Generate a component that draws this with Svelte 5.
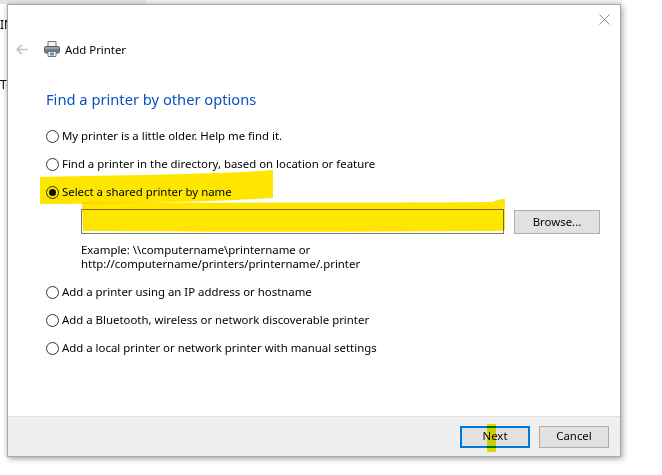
<script>
  const options = [
    { label: 'My printer is a little older. Help me find it.' },
    { label: 'Find a printer in the directory, based on location or feature' },
    { label: 'Select a shared printer by name', checked: true, path: true },
    { label: 'Add a printer using an IP address or hostname' },
    { label: 'Add a Bluetooth, wireless or network discoverable printer' },
    { label: 'Add a local printer or network printer with manual settings' }
  ];
</script>

<div class="desk">
  <div class="strip"></div>
  <div class="strip2"></div>
  <div class="behind">
    <span class="b1">IN</span>
    <span class="b2">T-</span>
  </div>
  <section class="dialog">
    <div class="close">
      <svg width="11" height="11" viewBox="0 0 11 11"><path d="M.5.5l10 10M10.500.5l-10 10" stroke="#8c8c8c" stroke-width="1" fill="none"/></svg>
    </div>
    <header class="head">
      <svg class="back" width="12" height="11" viewBox="0 0 12 11"><path d="M5.800.8L1.200 5.500l4.600 4.700M1.200 5.500H12" stroke="#c3c3c3" stroke-width="1.700" fill="none"/></svg>
      <svg class="printer" width="16" height="16" viewBox="0 0 16 16">
        <path d="M4 5.500V.5h8v5z" fill="#f2f2f2" stroke="#777"/>
        <rect x="0.500" y="5.500" width="15" height="6.500" rx="1.500" fill="#6f7a82" stroke="#555f66"/>
        <rect x="1" y="6" width="14" height="2" fill="#9aa3a9"/>
        <rect x="12.500" y="6.500" width="2" height="1.500" fill="#6cc04a"/>
        <path d="M4 10.500h8v5H4z" fill="#fff" stroke="#777"/>
        <rect x="6" y="11.500" width="4" height="3" fill="#3a9bd0"/>
      </svg>
      <span>Add Printer</span>
    </header>
    <div class="body">
      <h1>Find a printer by other options</h1>
      <ul>
        {#each options as o}
          <li>
            <span class="radio" class:on={o.checked}></span>
            <span class="lbl">{o.label}</span>
          </li>
          {#if o.path}
            <li class="pathrow">
              <div class="inputrow">
                <div class="input"></div>
                <button class="btn browse">Browse...</button>
              </div>
              <p>Example: \\computername\printername or<br />http://computername/printers/printername/.printer</p>
            </li>
          {/if}
        {/each}
      </ul>
    </div>
    <footer>
      <button class="btn primary">Next</button>
      <button class="btn">Cancel</button>
    </footer>
    <svg class="marks" width="613" height="453" viewBox="0 0 613 453">
      <path d="M32 172C90 170 200 170 265 165V193C200 197 90 199 32 199z" fill="#ffe600" style="mix-blend-mode:multiply"/>
      <path d="M74 197C200 198 400 198 484 197C488 196 491 194 497 194V225L490 226C350 227 200 227 75 226z" fill="#ffe600" style="mix-blend-mode:multiply"/>
      <rect x="479" y="419" width="9" height="28" fill="#eaea00" style="mix-blend-mode:multiply"/>
    </svg>
  </section>
</div>

<style>
  :global(body) { margin: 0; background: #fff; }
  .desk {
    position: relative;
    width: 662px;
    height: 475px;
    overflow: hidden;
    font-family: "Noto Sans", "Open Sans", sans-serif;
    font-size: 11.4px;
    color: #000;
    padding: 4px 0 0 7px;
    box-sizing: border-box;
  }
  .strip { position: absolute; left: 0; top: 0; width: 146px; height: 4px; background: #e4e4e4; }
  .strip2 { position: absolute; left: 146px; top: 0; width: 476px; height: 4px; background: #f1f1f1; }
  .behind { position: absolute; left: 0; top: 0; width: 7px; height: 475px; font-size: 12px; }
  .behind span { position: absolute; left: 0; line-height: 14px; white-space: nowrap; }
  .b1 { top: 18px; }
  .b2 { top: 78px; }
  .dialog {
    position: relative;
    width: 614px;
    height: 453px;
    box-sizing: border-box;
    background: #fff;
    border: 1px solid #a9a9a9;
    box-shadow: 2px 2px 6px rgba(0,0,0,.3), -1px 0 4px rgba(0,0,0,.12);
    display: flex;
    flex-direction: column;
  }
  .close { position: absolute; right: 10px; top: 9px; height: 11px; }
  .close svg { display: block; }
  .head { display: flex; align-items: center; height: 20px; margin: 34px 0 0 8px; }
  .back { margin-right: 16px; }
  .printer { margin-right: 5px; }
  .body { flex: 1; padding: 0 0 0 38px; }
  h1 { margin: 29px 0 0; font-size: 14.700px; font-weight: 400; color: #0a51c4; line-height: 22px; }
  ul { list-style: none; margin: 12px 0 0; padding: 0; }
  li { display: flex; align-items: center; gap: 3px; height: 28px; }
  .radio { width: 11px; height: 11px; border: 1px solid #333; border-radius: 50%; flex: none; display: flex; align-items: center; justify-content: center; background: #fff; }
  .radio.on::after { content: ""; width: 7px; height: 7px; border-radius: 50%; background: #111; }
  .lbl { white-space: nowrap; margin-top: -2px; }
  li.pathrow { display: block; height: auto; padding: 3px 0 0 35px; margin-bottom: 7px; }
  .inputrow { display: flex; gap: 10px; align-items: center; }
  .input { width: 421px; height: 23px; border: 1px solid #7a7a7a; background: #fff; }
  p { margin: 9px 0 0; line-height: 14px; }
  .btn { font: inherit; color: #000; background: #e1e1e1; border: 1px solid #adadad; padding: 0 0 2px; box-sizing: border-box; }
  .browse { width: 86px; height: 24px; padding: 0; }
  footer {
    height: 40px;
    background: #efefef;
    border-top: 1px solid #dfdfdf;
    display: flex;
    justify-content: flex-end;
    align-items: center;
    gap: 9px;
    padding: 0 11px 0 0;
    box-sizing: border-box;
  }
  footer .btn { width: 70px; height: 22px; }
  footer .primary { border: 2px solid #0078d7; }
  .marks { position: absolute; left: 0; top: 0; pointer-events: none; }
</style>
